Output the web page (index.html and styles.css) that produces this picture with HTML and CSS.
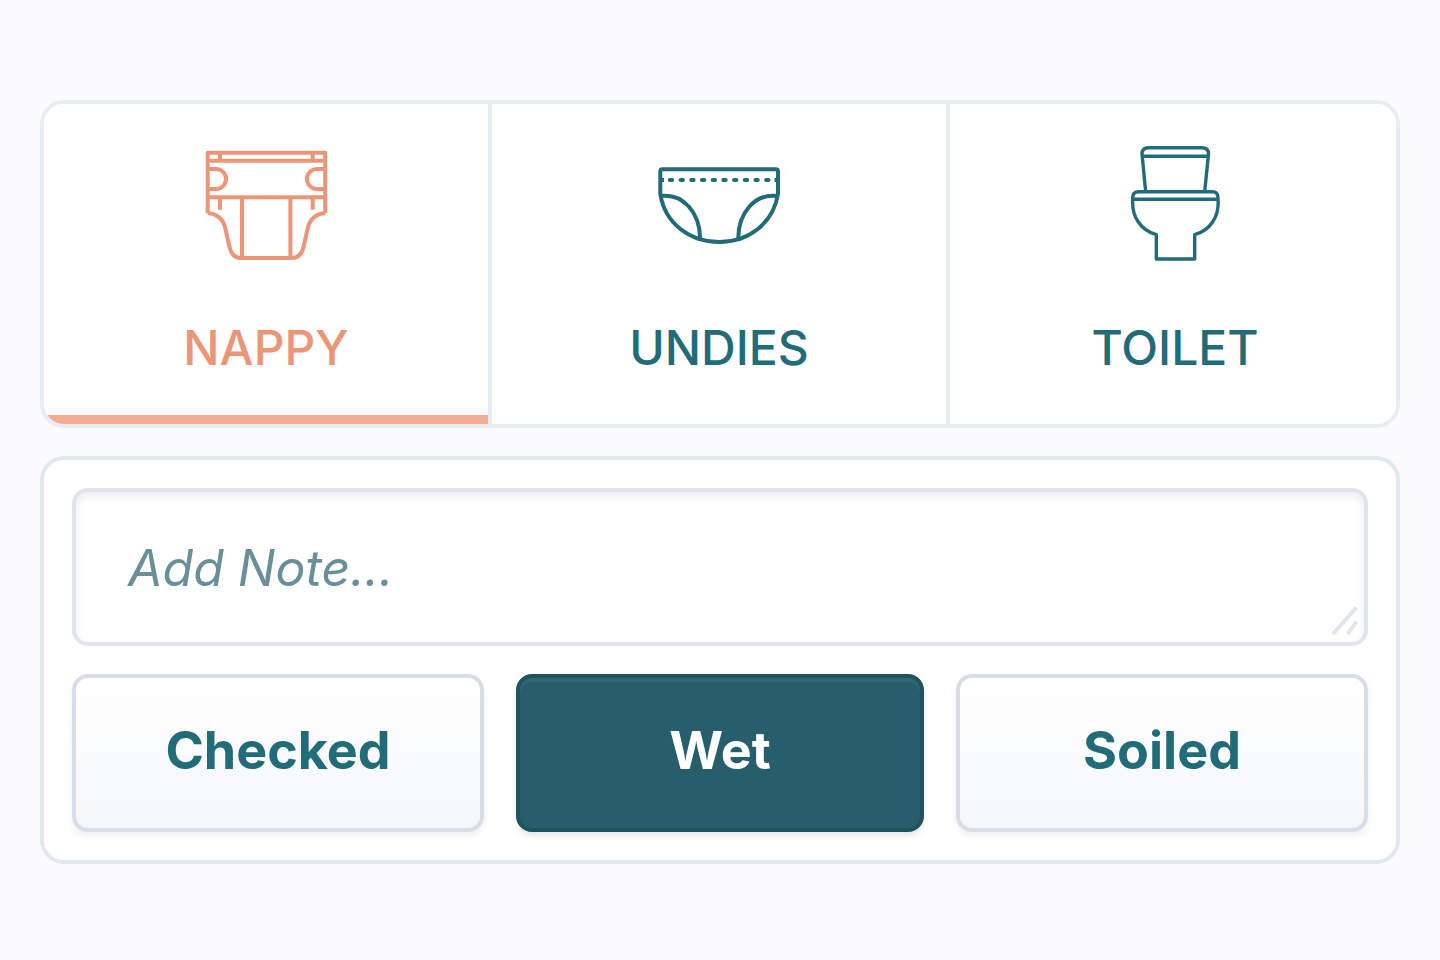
FILE: index.html
```html
<!DOCTYPE html>
<html lang="en">
<head>
<meta charset="utf-8">
<meta name="viewport" content="width=device-width, initial-scale=1">
<title>Nappy log</title>
<link rel="stylesheet" href="styles.css">
</head>
<body>
<main class="page">
  <div class="tabs" role="tablist" aria-label="Type">
    <button class="tab tab-active" type="button" role="tab" aria-selected="true">
      <svg class="icon icon-bold" viewBox="0 0 128 128" aria-hidden="true">
        <path d="M5.7 73.3V12.7H123.2V73.3M5.7 20.7H123.2M5.7 57.3H123.2M18 12.7v8M110.7 12.7v8M18 57.3v12.4M110.7 57.3v12.4M40 57.3V118M88.4 57.3V118"/>
        <path d="M5.7 29H14a10 10 0 0 1 0 20H5.7M123.2 29H115a10 10 0 0 0 0 20h8.2"/>
        <path d="M5.7 73.3C14 73.3 21 79 23 87L27.5 107C29 114 33 118 39.5 118H89.5C96 118 100 114 101.5 107L106 87C108 79 115 73.3 123.2 73.3"/>
      </svg>
      <span class="tab-label">NAPPY</span>
    </button>
    <button class="tab" type="button" role="tab" aria-selected="false">
      <svg class="icon icon-bold" viewBox="0 0 128 128" aria-hidden="true">
        <path d="M5.3 54V31.5Q5.3 29.3 7.5 29.3H120.8Q123 29.3 123 31.5V54C118 84 93 102 64.2 102S10 84 5.3 54Z"/>
        <path d="M6 56C28 53 45 73 45 98M122.3 56C100 53 83.3 73 83.3 98"/>
        <path d="M7 40h2M119.500 40h2"/>
        <path stroke-linecap="round" stroke-dasharray="2.4 8.3" d="M14.8 40H116"/>
      </svg>
      <span class="tab-label">UNDIES</span>
    </button>
    <button class="tab" type="button" role="tab" aria-selected="false">
      <svg class="icon" viewBox="0 0 128 128" aria-hidden="true">
        <path d="M34.7 51.7L31 14Q31 7.7 37.5 7.7H91Q97.5 7.7 97.5 14L93.7 51.7M31.3 16.3H97.2"/>
        <path d="M21.7 59.3V57.5Q21.7 51.7 27.5 51.7H101.2Q107 51.7 107 57.5V59.3ZM21.7 59.3C20.5 77 30 90.5 45.3 94.7V119H83.7V94.7C99 90.5 108.5 77 107 59.3"/>
      </svg>
      <span class="tab-label">TOILET</span>
    </button>
  </div>

  <form class="panel">
    <div class="note-field">
      <textarea class="note" rows="1" placeholder="Add Note..." aria-label="Add note"></textarea>
      <svg class="grip" viewBox="0 0 28 30" aria-hidden="true"><path d="M2 28L25.500 1.500M16.500 28L25.500 15.500"/></svg>
    </div>
    <div class="actions">
      <button class="action" type="button">Checked</button>
      <button class="action action-selected" type="button" aria-pressed="true">Wet</button>
      <button class="action" type="button">Soiled</button>
    </div>
  </form>
</main>
</body>
</html>
```
FILE: styles.css
```css
* {
  box-sizing: border-box;
}

body {
  margin: 0;
  background: #fbfbfe;
  color: #226b79;
  font-family: Inter, "Open Sans", sans-serif;
}

button,
textarea {
  font: inherit;
  color: inherit;
}

.page {
  display: flex;
  flex-direction: column;
  gap: 28px;
  padding: 100px 40px;
}

.tabs {
  display: grid;
  grid-template-columns: 448fr 458fr 446fr;
  border: 4px solid #eaecf4;
  border-radius: 24px;
  background: #fff;
  overflow: hidden;
}

.tab {
  display: flex;
  flex-direction: column;
  align-items: center;
  gap: 50px;
  padding: 36px 4px 46px 0;
  border: 0;
  background: #fff;
  box-shadow: inset -4px 0 #eaecf4;
  cursor: pointer;
}

.tab:last-child {
  padding-right: 0;
  padding-left: 4px;
  box-shadow: none;
}

.tab-active {
  color: #eb9678;
  box-shadow: inset -4px 0 #eaecf4, inset 0 -9px #f5ac95;
}

.icon {
  width: 128px;
  height: 128px;
  fill: none;
  stroke: currentColor;
  stroke-width: 3.4;
  stroke-linejoin: round;
}

.icon-bold {
  stroke-width: 4;
}

.tab-label {
  font-size: 48px;
  line-height: 60px;
  font-weight: 500;
}

.panel {
  display: flex;
  flex-direction: column;
  gap: 28px;
  padding: 28px;
  border: 4px solid #e1e8ef;
  border-radius: 24px;
  background: #fff;
}

.note-field {
  position: relative;
  display: flex;
}

.note {
  flex: 1;
  height: 158px;
  padding: 44px 52px;
  border: 4px solid #e1e4ed;
  border-radius: 16px;
  background: #fff;
  box-shadow: inset 0 4px 8px #edeef4;
  font-size: 50px;
  line-height: 64px;
  resize: none;
  overflow: hidden;
}

.note::placeholder {
  color: #688f9a;
  font-style: italic;
  opacity: 1;
}

.grip {
  position: absolute;
  right: 9px;
  bottom: 10px;
  width: 28px;
  height: 30px;
  fill: none;
  stroke: #e1e4ed;
  stroke-width: 4;
  pointer-events: none;
}

.actions {
  display: grid;
  grid-template-columns: 412fr 408fr 412fr;
  gap: 32px;
}

.action {
  height: 158px;
  padding: 0 0 4px;
  border: 4px solid #d8dde8;
  border-radius: 16px;
  background: linear-gradient(#fff, #f5f7fa);
  box-shadow: 0 4px 6px #00000010;
  font-size: 52px;
  line-height: 64px;
  font-weight: 700;
  cursor: pointer;
}

.action-selected {
  border-color: #20535d;
  background: #265f6b;
  box-shadow: inset 0 4px #306874, 0 4px 6px #00000018;
  color: #fff;
}
```
